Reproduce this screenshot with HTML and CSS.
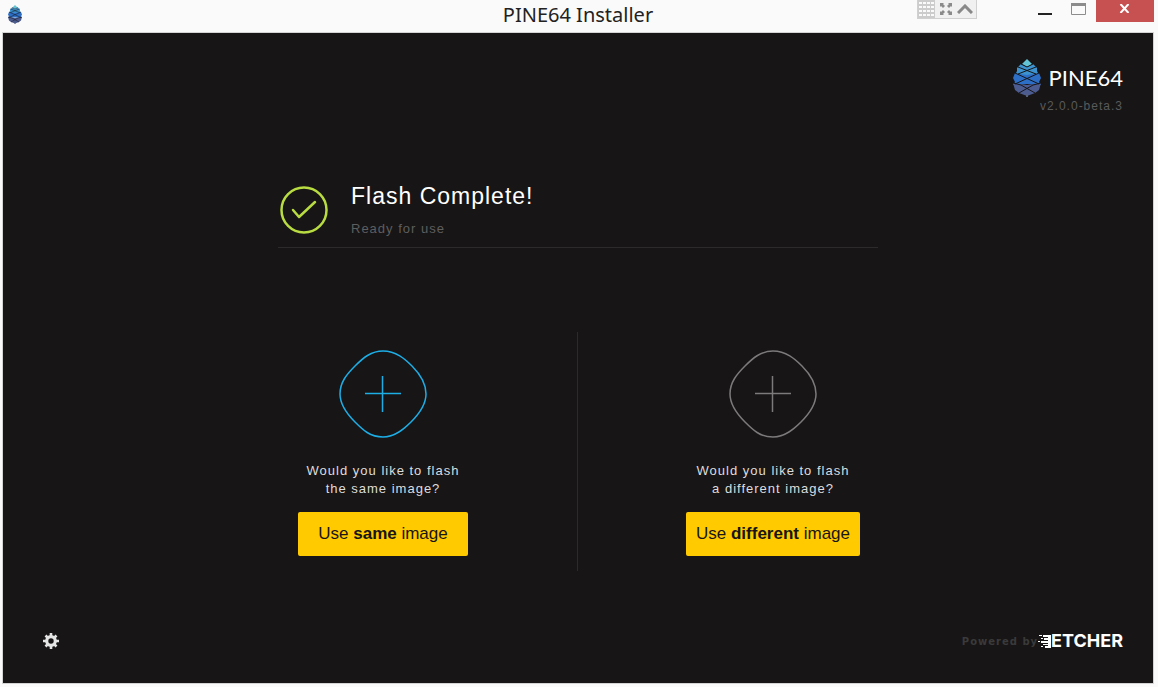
FILE: index.html
```html
<!DOCTYPE html>
<html lang="en">
<head>
<meta charset="UTF-8">
<meta name="viewport" content="width=device-width, initial-scale=1.0">
<title>PINE64 Installer</title>
<link rel="stylesheet" href="styles.css">
</head>
<body>

<!-- shared pine cone logo -->
<svg class="defs" aria-hidden="true">
  <symbol id="pinecone" viewBox="0 0 28 38">
    <path fill="#62c4d4" d="M14 0l5 5-5 3-5-3z"/>
    <path fill="#3d92d0" d="M8 5l6 3 6-3 4 4v3l2 4-12 3-12-3 2-4V9z"/>
    <path fill="#2d6fc6" d="M2 14l12 2 12-2 2 5-2 4 2 3-14-1-14 1 2-3-2-4z"/>
    <path fill="#4c5c90" d="M0 24l14 2 14-2-2 7-4 3-8 3-8-3-4-3z"/>
    <path fill="#56607c" d="M13 35h2v3h-2z"/>
    <path class="cone-gaps" d="M8 5l6 3 6-3M5 8l18 7M23 8L5 15M2 14l24 11M26 14L2 25M0 24l8 2 14 8M28 24l-8 2-14 8"/>
  </symbol>
</svg>

<header class="titlebar">
  <svg class="titlebar-icon"><use href="#pinecone"/></svg>
  <h1 class="titlebar-title">PINE64 Installer</h1>
  <div class="titlebar-controls">
    <div class="overlay-tools">
      <span class="grip"></span>
      <button class="tool-btn" aria-label="Full screen">
        <svg width="12" height="12" viewBox="0 0 12 12" fill="#8a8a8a"><path d="M0 0h4L3 1l2 2-2 2-2-2-1 1zM12 0v4l-1-1-2 2-2-2 2-2-1-1zM12 12H8l1-1-2-2 2-2 2 2 1-1zM0 12V8l1 1 2-2 2 2-2 2 1 1z"/></svg>
      </button>
      <button class="tool-btn" aria-label="Collapse">
        <svg width="16" height="10" viewBox="0 0 16 10" fill="none" stroke="#888" stroke-width="3"><path d="M1 9l7-7 7 7"/></svg>
      </button>
    </div>
    <button class="win-btn" aria-label="Minimize">
      <svg width="16" height="16" viewBox="0 0 16 16"><path fill="#222" d="M1 13h14v2H1z"/></svg>
    </button>
    <button class="win-btn" aria-label="Maximize">
      <svg width="16" height="16" viewBox="0 0 16 16"><path fill="none" stroke="#8c8c8c" d="M.5 3.500h14v11H.5z"/><path fill="#8c8c8c" d="M0 3h15v3H0z"/></svg>
    </button>
    <button class="win-btn win-close" aria-label="Close">
      <svg width="12" height="9" viewBox="0 0 12 9" stroke="#fff" stroke-width="2"><path d="M1.500 0l8 9M9.500 0l-8 9"/></svg>
    </button>
  </div>
</header>

<main class="app">
  <div class="brand">
    <div class="brand-logo">
      <svg width="28" height="38"><use href="#pinecone"/></svg>
      <span class="brand-name">PINE64</span>
    </div>
    <span class="version">v2.0.0-beta.3</span>
  </div>

  <div class="content">
    <section class="status">
      <svg width="48" height="48" viewBox="0 0 48 48" fill="none" stroke="#b8dc42" stroke-linecap="round" stroke-linejoin="round">
        <circle cx="24" cy="24" r="22.500" stroke-width="2.500"/>
        <path d="M13 24l6 7 16-15" stroke-width="2.500"/>
      </svg>
      <div>
        <h2 class="status-title">Flash Complete!</h2>
        <p class="status-text">Ready for use</p>
      </div>
    </section>

    <section class="choices">
      <div class="choice">
        <svg class="choice-icon choice-icon-active" viewBox="0 0 88 88"><path d="M44 1C57 1 66 9 73 16C81 24 87 33 87 44C87 55 80 64 72 72C65 79 56 87 44 87C31 87 24 80 16 72C8 64 1 55 1 44C1 32 8 24 16 16C24 8 32 1 44 1z"/><path d="M43.500 26v36M26 43.500h36"/></svg>
        <p class="choice-text">Would you like to flash<br>the same image?</p>
        <button class="btn">Use <b>same</b> image</button>
      </div>
      <div class="divider"></div>
      <div class="choice">
        <svg class="choice-icon" viewBox="0 0 88 88"><path d="M44 1C57 1 66 9 73 16C81 24 87 33 87 44C87 55 80 64 72 72C65 79 56 87 44 87C31 87 24 80 16 72C8 64 1 55 1 44C1 32 8 24 16 16C24 8 32 1 44 1z"/><path d="M43.500 26v36M26 43.500h36"/></svg>
        <p class="choice-text">Would you like to flash<br>a different image?</p>
        <button class="btn">Use <b>different</b> image</button>
      </div>
    </section>
  </div>

  <footer class="footer">
    <button class="settings" aria-label="Settings">
      <svg width="16" height="16" viewBox="0 0 16 16">
        <circle cx="8" cy="8" r="4.300" fill="none" stroke="#e4e4e4" stroke-width="3.200"/>
        <path stroke="#e4e4e4" stroke-width="2.600" d="M8 0v3M8 13v3M0 8h3M13 8h3M2.500 2.500l2 2M11.500 11.500l2 2M13.500 2.500l-2 2M4.500 11.500l-2 2"/>
      </svg>
    </button>
    <div class="powered">
      <span class="powered-label">Powered by</span>
      <a class="etcher" href="#">
        <svg width="13" height="13" viewBox="0 0 13 13" fill="#fff"><path d="M1 0h3v1H1zM5 0h8v2H5zM3 3h2v1H3zM6 3h7v2H6zM0 6h2v1H0zM3 6h10v2H3zM5 9h8v1H5zM3 11h2v1H3zM7 11h6v2H7zM10 0h3v13h-3z"/></svg>
        <span>ETCHER</span>
      </a>
    </div>
  </footer>
</main>

</body>
</html>
```
FILE: styles.css
```css
* {
  box-sizing: border-box;
}

body {
  margin: 0;
  min-height: 100vh;
  display: flex;
  flex-direction: column;
  padding: 0 4px 3px 2px;
  background: #fafafa;
  font-family: "Liberation Sans", Arial, sans-serif;
}

h1, h2, p {
  margin: 0;
  font-weight: normal;
}

svg {
  display: block;
}

button {
  border: none;
  padding: 0;
  background: none;
  font-family: inherit;
  cursor: pointer;
}

.defs {
  position: absolute;
  width: 0;
  height: 0;
}

.cone-gaps {
  fill: none;
  stroke: #171516;
  stroke-width: 1;
}

/* title bar */
.titlebar {
  display: grid;
  grid-template-columns: 1fr auto 1fr;
  height: 32px;
}

.titlebar-icon {
  width: 14px;
  height: 19px;
  margin: 5px 0 0 6px;
}

.titlebar-title {
  font-family: "Noto Sans", sans-serif;
  font-size: 20px;
  line-height: 30px;
  color: #222;
}

.titlebar-controls {
  display: flex;
  justify-content: flex-end;
  align-items: flex-start;
}

.overlay-tools {
  display: flex;
  align-items: center;
  gap: 5px;
  height: 19px;
  margin-right: 51px;
  padding-right: 3px;
  border: 1px solid #d0d0d0;
  border-top: none;
  background: #f0f0f0;
}

.grip {
  width: 17px;
  height: 18px;
  background-color: #fafafa;
  background-image: linear-gradient(#ccc 2px, transparent 2px), linear-gradient(90deg, #ccc 1px, transparent 1px);
  background-size: 4px 4px;
}

.win-btn {
  width: 34px;
  height: 22px;
  display: flex;
  justify-content: center;
}

.win-close {
  width: 58px;
  padding-top: 4px;
  background: #c75050;
}

/* application area */
.app {
  flex: 1;
  display: flex;
  flex-direction: column;
  padding: 25px 30px 32px;
  border: 1px solid #d4d4d4;
  background: #171516;
  color: #fff;
}

.brand {
  align-self: flex-end;
  text-align: right;
}

.brand-logo {
  display: flex;
  align-items: center;
  gap: 8px;
}

.brand-name {
  font-family: Lato, sans-serif;
  font-size: 22px;
  line-height: 40px;
}

.version {
  display: block;
  font-size: 12px;
  line-height: 16px;
  letter-spacing: 1px;
  color: #5a5a5a;
}

.content {
  width: 600px;
  max-width: 100%;
  margin: 68px auto 0;
}

.status {
  display: flex;
  align-items: center;
  gap: 23px;
  padding: 0 0 9px 2px;
  border-bottom: 1px solid #2c2a2b;
}

.status-title {
  font-size: 23px;
  line-height: 28px;
  letter-spacing: 1px;
}

.status-text {
  margin-top: 10px;
  font-size: 13px;
  line-height: 18px;
  letter-spacing: 1px;
  color: #5e5e5e;
}

.choices {
  display: flex;
  justify-content: space-between;
  margin-top: 84px;
  padding: 0 18px 0 20px;
}

.choice {
  display: flex;
  flex-direction: column;
  align-items: center;
  padding: 18px 0 15px;
}

.choice-icon {
  width: 88px;
  height: 88px;
  fill: none;
  stroke: #7c7a7b;
  stroke-width: 1.500;
}

.choice-icon-active {
  stroke: #1eaee6;
}

.choice-text {
  margin: 24px 0 14px;
  font-size: 13px;
  line-height: 18px;
  letter-spacing: 1px;
  text-align: center;
  color: #ddd;
}

.divider {
  width: 1px;
  background: #2c2a2b;
}

.btn {
  min-width: 170px;
  height: 44px;
  padding: 0 10px;
  border-radius: 2px;
  background: #ffca00;
  color: #171516;
  font-size: 17px;
}

/* footer */
.footer {
  display: flex;
  justify-content: space-between;
  align-items: center;
  margin-top: auto;
  padding-left: 10px;
}

.powered {
  display: flex;
  align-items: center;
}

.powered-label {
  font-family: "DejaVu Sans", sans-serif;
  font-size: 10px;
  font-weight: bold;
  letter-spacing: 1px;
  color: #3a3a3a;
}

.etcher {
  display: flex;
  align-items: center;
  color: #fff;
  font-family: Inter, sans-serif;
  font-size: 18px;
  font-weight: 700;
  line-height: 20px;
  text-decoration: none;
}
```
